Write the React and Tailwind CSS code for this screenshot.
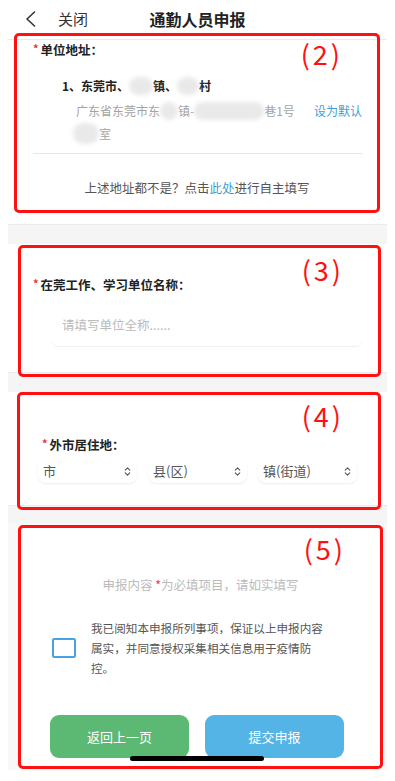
import React from 'react';
import { ChevronsUpDown } from 'lucide-react';

const Star = () => <span className="text-[#e53935] text-[11px] mr-[2px] relative -top-[2px]">*</span>;

const Blur = ({ w = 24, cls = '' }) => (
  <span className={`inline-block h-[18px] rounded-full bg-[#e9e9e9] blur-[2px] align-middle ${cls}`} style={{ width: w }} />
);

const Mark = ({ n, top }) => (
  <div className={`absolute right-[34px] ${top} text-[27px] leading-none tracking-[3px] text-[#ff1111] font-normal`}>({n})</div>
);

const Select = ({ label }) => (
  <div className="w-[99px] h-[24px] rounded-[8px] bg-white shadow-[0_1px_2px_rgba(0,0,0,0.08)] flex items-center justify-between pl-[5px] pr-[4px] text-[13px] text-[#555]">
    <span>{label}</span>
    <ChevronsUpDown size={11} strokeWidth={2.4} className="text-[#555]" />
  </div>
);

export default function App() {
  return (
    <div className="w-[395px] h-[781px] bg-white overflow-hidden font-['Noto_Sans_CJK_SC',sans-serif] text-[#222]">
      {/* header */}
      <div className="h-[40px] mx-2 border-b border-[#ebebeb] grid grid-cols-[1fr_auto_1fr] items-center pb-[1px]">
        <div className="flex items-center pl-[17px]">
          <svg width="11" height="16" viewBox="0 0 11 16" fill="none">
            <path d="M9.5 1 L2 8 L9.5 15" stroke="#333" strokeWidth="1.6" strokeLinecap="round" strokeLinejoin="round" />
          </svg>
          <span className="ml-[22px] text-[15px] text-[#333]">关闭</span>
        </div>
        <div className="text-[16px] font-bold text-[#222]">通勤人员申报</div>
        <div />
      </div>

      {/* (2) 单位地址 */}
      <div className="mx-2 h-[184px] flex flex-col">
        <div className="relative z-10 -mt-[7px] ml-[6px] w-[366px] h-[180px] border-[3px] border-[#ff1111] rounded-[5px] flex flex-col">
          <Mark n={2} top="top-[4px]" />
          <div className="mt-[6px] pl-[16px] text-[12.5px] leading-[16px] font-bold"><Star />单位地址：</div>
          <div className="mt-[19px] pl-[45px] text-[12px] leading-[16px] font-bold flex items-center">
            <span>1、东莞市、</span><Blur w={24} /><span>镇、</span><Blur w={22} /><span>村</span>
          </div>
          <div className="mt-[4px] pl-[59px] pr-[15px] flex items-start text-[12px] leading-[23px]">
            <div className="flex-1 text-[#a3a3a3]">
              <div className="flex items-center">
                <span>广东省东莞市东</span><Blur w={18} /><span>镇-</span><Blur w={70} /><span>巷1号</span>
              </div>
              <div className="flex items-center -ml-[3px]">
                <Blur w={26} cls="h-[21px]" /><span>室</span>
              </div>
            </div>
            <span className="text-[#3d9fd8]">设为默认</span>
          </div>
          <div className="mt-[8px] ml-[16px] mr-[15px] border-t border-[#e6e6e6]" />
          <div className="mt-[26px] text-center text-[12.5px] leading-[16px] text-[#555]">
            上述地址都不是？点击<span className="text-[#3d9fd8]">此处</span>进行自主填写
          </div>
        </div>
      </div>

      <div className="mx-2 h-[20px] bg-[#f5f5f5] border-t border-[#ececec]" />

      {/* (3) 单位名称 */}
      <div className="mx-2 h-[128px] flex flex-col">
        <div className="relative z-10 mt-[1px] -mb-[5px] ml-[10px] w-[363px] h-[132px] border-[3px] border-[#ff1111] rounded-[5px] flex flex-col">
          <Mark n={3} top="top-[8px]" />
          <div className="mt-[29px] pl-[12px] text-[12.5px] leading-[16px] font-bold"><Star />在莞工作、学习单位名称：</div>
          <div className="mt-[12px] ml-[31px] mr-[16px] h-[41px] rounded-[6px] shadow-[0_1px_1px_rgba(0,0,0,0.07)] flex items-center pl-[10px] text-[12.5px] text-[#bbb]">
            请填写单位全称......
          </div>
        </div>
      </div>

      <div className="mx-2 h-[20px] bg-[#f5f5f5] border-t border-[#ececec]" />

      {/* (4) 外市居住地 */}
      <div className="mx-2 h-[113px] flex flex-col">
        <div className="relative z-10 -mb-[5px] ml-[9px] w-[364px] h-[118px] border-[3px] border-[#ff1111] rounded-[5px] flex flex-col">
          <Mark n={4} top="top-[7px]" />
          <div className="mt-[42px] pl-[22px] text-[12.5px] leading-[16px] font-bold"><Star />外市居住地：</div>
          <div className="mt-[6px] ml-[18px] flex gap-[11px]">
            <Select label="市" />
            <Select label="县(区)" />
            <Select label="镇(街道)" />
          </div>
        </div>
      </div>

      <div className="mx-2 h-[18px] bg-[#f5f5f5] border-t border-[#ececec]" />

      {/* (5) 提交 */}
      <div className="mx-2 h-[247px] bg-[#f8f8f8] flex flex-col">
        <div className="relative z-10 mt-[2px] ml-[10px] w-[365px] h-[244px] bg-white border-[3px] border-[#ff1111] rounded-[5px] flex flex-col">
          <Mark n={5} top="top-[7px]" />
          <div className="mt-[49px] text-center text-[12.5px] leading-[16px] text-[#bbb]">
            申报内容 <span className="text-[#e53935]">*</span>为必填项目，请如实填写
          </div>
          <div className="mt-[25px] pl-[31px] flex items-center gap-[15px]">
            <div className="w-[24px] h-[20px] border-2 border-[#4aa3e0] rounded-[2px] shrink-0" />
            <p className="w-[234px] shrink-0 text-[11.6px] leading-[20px] text-[#555]">
              我已阅知本申报所列事项，保证以上申报内容属实，并同意授权采集相关信息用于疫情防控。
            </p>
          </div>
          <div className="mt-[37px] pl-[29px] flex gap-[16px]">
            <button className="w-[139px] h-[43px] rounded-[9px] bg-[#5bb974] text-white text-[13px]">返回上一页</button>
            <button className="w-[139px] h-[43px] rounded-[9px] bg-[#55b4e6] text-white text-[13px]">提交申报</button>
          </div>
          <div className="absolute left-[109px] top-[228px] w-[134px] h-[5px] rounded-full bg-black" />
        </div>
      </div>
    </div>
  );
}
